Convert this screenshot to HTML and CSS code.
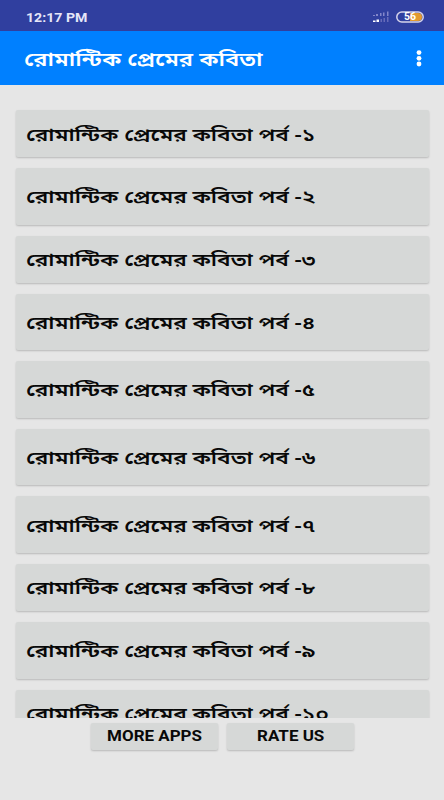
FILE: index.html
```html
<!DOCTYPE html>
<html lang="bn">
<head>
    <meta charset="UTF-8">
    <meta name="viewport" content="width=device-width, initial-scale=1.0">
    <title>রোমান্টিক প্রেমের কবিতা</title>
    <link rel="stylesheet" href="styles.css">
</head>
<body>

<div class="status-bar">
    <span class="time">12:17 PM</span>
    <svg class="status-icons" width="54" height="14" viewBox="0 0 54 14">
        <!-- SIM 1 -->
        <g fill="#8286ca">
            <rect x="1" y="5" width="2" height="1"/>
            <rect x="4" y="4" width="2" height="2"/>
            <rect x="8" y="3" width="1.5" height="3"/>
            <rect x="11" y="2.5" width="1.5" height="3.5"/>
            <rect x="15" y="1.5" width="1.5" height="4.5"/>
        </g>
        <!-- SIM 2 -->
        <rect x="1" y="10.5" width="2.5" height="1.5" fill="#fff"/>
        <rect x="4.5" y="9.5" width="2.5" height="2.5" fill="#fff"/>
        <g fill="#666bb9">
            <rect x="8.5" y="9" width="1.5" height="3"/>
            <rect x="11.5" y="8" width="1.5" height="4"/>
            <rect x="15" y="7" width="1.5" height="5"/>
        </g>
        <!-- batteria -->
        <path d="M38 3h8a4 4 0 0 1 0 8H38z" fill="#e39a2e"/>
        <rect x="24.8" y="2" width="26.4" height="10" rx="5" fill="none" stroke="#d5d3ea" stroke-width="1.5"/>
        <text x="38" y="10.3" text-anchor="middle" class="battery">56</text>
    </svg>
</div>

<header>
    <h1>রোমান্টিক প্রেমের কবিতা</h1>
    <svg class="menu" width="6" height="18" viewBox="0 0 6 18" fill="#fff">
        <circle cx="3" cy="2.6" r="2.4"/>
        <circle cx="3" cy="8.3" r="2.4"/>
        <circle cx="3" cy="14" r="2.4"/>
    </svg>
</header>

<main>
    <button class="item short"><span>রোমান্টিক প্রেমের কবিতা পর্ব -১</span></button>
    <button class="item"><span>রোমান্টিক প্রেমের কবিতা পর্ব -২</span></button>
    <button class="item short"><span>রোমান্টিক প্রেমের কবিতা পর্ব -৩</span></button>
    <button class="item"><span>রোমান্টিক প্রেমের কবিতা পর্ব -৪</span></button>
    <button class="item"><span>রোমান্টিক প্রেমের কবিতা পর্ব -৫</span></button>
    <button class="item"><span>রোমান্টিক প্রেমের কবিতা পর্ব -৬</span></button>
    <button class="item"><span>রোমান্টিক প্রেমের কবিতা পর্ব -৭</span></button>
    <button class="item short"><span>রোমান্টিক প্রেমের কবিতা পর্ব -৮</span></button>
    <button class="item"><span>রোমান্টিক প্রেমের কবিতা পর্ব -৯</span></button>
    <button class="item short"><span>রোমান্টিক প্রেমের কবিতা পর্ব -১০</span></button>
</main>

<footer>
    <button class="action"><span>MORE APPS</span></button>
    <button class="action"><span>RATE US</span></button>
</footer>

</body>
</html>
```
FILE: styles.css
```css
body {
    font-family: "Noto Sans", "Noto Sans Bengali", Roboto, sans-serif;
    background-color: #e6e6e6;
    margin: 0;
    height: 800px;
    display: flex;
    flex-direction: column;
    overflow: hidden;
}

.status-bar {
    height: 31px;
    background-color: #303f9f;
    padding: 3px 18px 0 26px;
    box-sizing: border-box;
    display: flex;
    justify-content: space-between;
    align-items: center;
    flex-shrink: 0;
}

.time {
    font-family: Roboto, sans-serif;
    font-size: 12.5px;
    font-weight: 700;
    color: #e6e6f8;
    transform: scaleX(1.13);
    transform-origin: left;
}

.battery {
    font: 700 10.5px Roboto, sans-serif;
    fill: #fff;
}

header {
    height: 54px;
    background-color: #0080ff;
    padding: 2px 22px 0 24px;
    box-sizing: border-box;
    display: flex;
    justify-content: space-between;
    align-items: center;
    flex-shrink: 0;
}

header h1 {
    margin: 0;
    font-size: 19px;
    font-weight: 600;
    line-height: 30px;
    color: #fff;
    white-space: nowrap;
    transform: scaleX(1.25);
    transform-origin: left;
}

main {
    height: 633px;
    padding: 25px 15px 0 16px;
    box-sizing: border-box;
    display: flex;
    flex-direction: column;
    gap: 11px;
    overflow: hidden;
    flex-shrink: 0;
}

button {
    border: none;
    border-radius: 2px;
    background-color: #d6d8d7;
    color: #080808;
    box-shadow: 0 1px 2px rgba(0, 0, 0, 0.2);
    font-family: inherit;
    font-weight: 700;
    white-space: nowrap;
}

button span {
    display: inline-block;
}

.item {
    height: 56.6px;
    padding: 0 9px 0 10px;
    font-size: 18px;
    font-weight: 600;
    line-height: 28px;
    text-align: left;
    flex-shrink: 0;
}

.item span {
    transform: scaleX(1.254);
    transform-origin: left;
}

.short {
    height: 47px;
}

footer {
    padding: 5px 0 0;
    display: flex;
    justify-content: center;
    gap: 9px;
}

.action {
    width: 127px;
    height: 27px;
    padding: 0 0 0 2px;
    font-family: Roboto, sans-serif;
    font-size: 14.5px;
}

.action span {
    transform: scaleX(1.17);
}
```
